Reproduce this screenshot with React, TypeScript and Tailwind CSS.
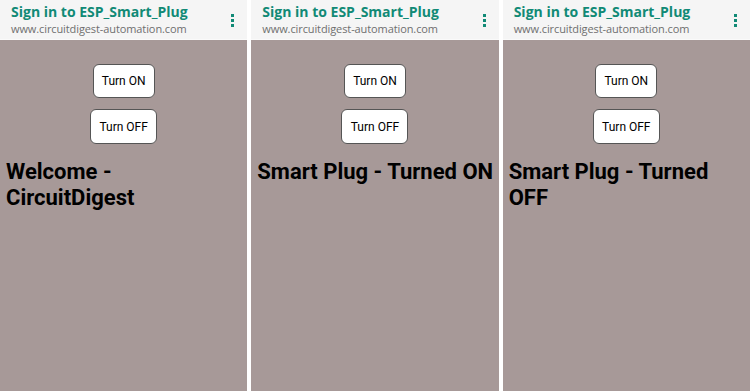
import React from "react";

function Panel({ lines }: { lines: string[] }) {
  return (
    <div className="flex-1 flex flex-col bg-[#a79998] min-w-0">
      <div className="h-[40px] bg-[#f5f5f5] border-b border-[#fafafa] flex items-start justify-between pl-[11px] pr-[13px] pt-[2px]">
        <div className="flex flex-col">
          <div className="text-[14px] leading-[20px] font-bold text-[#118a76]" style={{ fontFamily: '"Open Sans", sans-serif' }}>
            Sign in to ESP_Smart_Plug
          </div>
          <div className="text-[11px] leading-[14px] text-[#6f6f6f] tracking-[-0.1px]" style={{ fontFamily: '"Open Sans", sans-serif' }}>
            www.circuitdigest-automation.com
          </div>
        </div>
        <div className="flex flex-col gap-[2px] mt-[12px]">
          <span className="w-[3px] h-[3px] bg-[#118a76]" />
          <span className="w-[3px] h-[3px] bg-[#118a76]" />
          <span className="w-[3px] h-[3px] bg-[#118a76]" />
        </div>
      </div>
      <div className="flex flex-col items-center pt-[24px] gap-[11px]" style={{ fontFamily: "Roboto, sans-serif" }}>
        <button className="h-[34px] w-[62px] bg-white border border-[#555] rounded-[6px] text-[12px] text-black">Turn ON</button>
        <button className="h-[35px] w-[67px] bg-white border border-[#555] rounded-[6px] text-[12px] text-black">Turn OFF</button>
      </div>
      <div className="pl-[6px] mt-[15px] text-[22px] leading-[26px] font-bold text-black" style={{ fontFamily: "Roboto, sans-serif" }}>
        {lines.map((l, i) => (
          <div key={i} className="whitespace-nowrap">{l}</div>
        ))}
      </div>
    </div>
  );
}

export default function App() {
  return (
    <div className="w-[750px] h-[391px] flex gap-[4px] bg-white overflow-hidden">
      <Panel lines={["Welcome -", "CircuitDigest"]} />
      <Panel lines={["Smart Plug - Turned ON"]} />
      <Panel lines={["Smart Plug - Turned", "OFF"]} />
    </div>
  );
}
